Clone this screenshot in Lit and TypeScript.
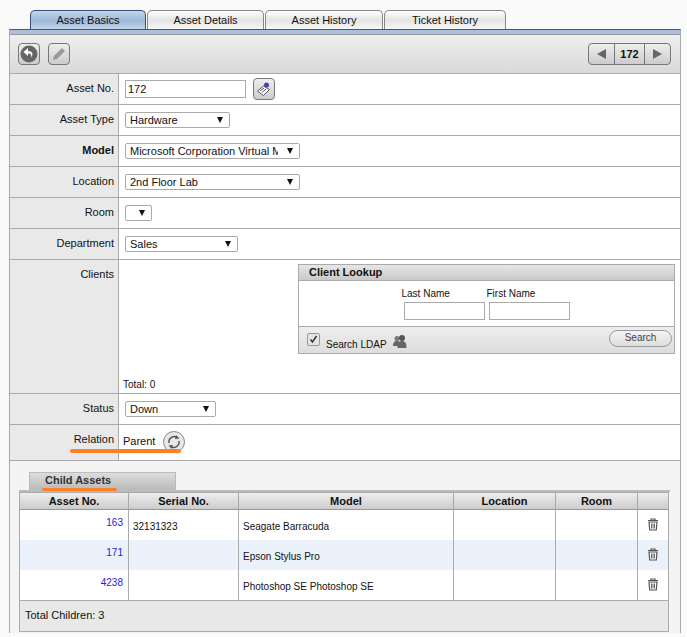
import { LitElement, html, css, svg } from "lit";
import { customElement } from "lit/decorators.js";

const sel = (text: string, cls: string) => html`<div class="sel ${cls}"><span class="seltext">${text}</span><span class="arrow"></span></div>`;
const trash = svg`<svg width="12" height="13" viewBox="0 0 12 13"><path d="M4 2V1h4v1M1 2.500h10" fill="none" stroke="#555" stroke-width="1.200"/><path d="M2 4h8l-.7 8H2.700z" fill="#fff" stroke="#555" stroke-width="1.200"/><path d="M4.500 5.500v5M6 5.500v5M7.500 5.500v5" stroke="#666"/></svg>`;

@customElement("app-root")
export class AppRoot extends LitElement {
  static styles = css`
    :host { display: block; width: 687px; height: 637px; background: #fafafa; font-family: "Liberation Sans", Arial, sans-serif; font-size: 11px; color: #111; position: relative; overflow: hidden; }
    .tabs { display: flex; padding: 10px 0 0 30px; height: 19px; gap: 1px; }
    .tab { height: 19px; box-sizing: border-box; border: 1px solid #888; border-bottom: 0; border-radius: 5px 5px 0 0; text-align: center; line-height: 18px; background: linear-gradient(#fff, #e4e4e4 50%, #f6f6f6); }
    .tab.active { background: linear-gradient(#c3d4e8, #9db8d8 55%, #c6d6e8); border-color: #33507f; }
    .t1 { width: 116px; } .t2 { width: 117px; } .t3 { width: 118px; } .t4 { width: 122px; }
    .panel { margin-left: 9px; width: 672px; box-sizing: border-box; border-top: 1px solid #555; border-right: 1px solid #aaa; border-left: 1px solid #aaa; }
    .band { height: 4px; background: #a9c1dd; border-bottom: 1px solid #999; }
    .toolbar { height: 39px; box-sizing: border-box; display: flex; align-items: center; justify-content: space-between; padding: 0 9px 0 8px; background: linear-gradient(#efefef, #d9d9d9); border-bottom: 1px solid #aaa; }
    .btns { display: flex; gap: 8px; }
    .ibtn { width: 22px; height: 22px; box-sizing: border-box; border: 1px solid #777; border-radius: 4px; background: linear-gradient(#eee, #ccc); display: flex; align-items: center; justify-content: center; }
    .pager { display: flex; height: 22px; box-sizing: border-box; border: 1px solid #777; border-radius: 4px; background: linear-gradient(#eee, #ccc); align-items: stretch; }
    .pager div { display: flex; align-items: center; justify-content: center; }
    .pg-a { width: 25px; } .pg-n { width: 29px; border-left: 1px solid #777; border-right: 1px solid #777; font-weight: bold; }
    .tl { border-style: solid; border-width: 5px 9px 5px 0; border-color: transparent #666 transparent transparent; }
    .tr { border-style: solid; border-width: 5px 0 5px 9px; border-color: transparent transparent transparent #666; }
    .row { display: grid; grid-template-columns: 108px 1fr; border-bottom: 1px solid #aaa; height: 31px; box-sizing: border-box; }
    .label { background: #e9e9e9; border-right: 1px solid #aaa; text-align: right; padding: 8px 4px 0 0; box-sizing: border-box; width: 109px; }
    .label b { font-weight: bold; }
    .val { background: #fff; display: flex; align-items: center; padding: 0 0 0 6px; gap: 7px; margin-left: 1px; }
    .h36 { height: 36px; } .h134 { height: 134px; }
    input.txt { box-sizing: border-box; height: 18px; border: 1px solid #aaa; font: 11px "Liberation Sans", Arial, sans-serif; padding: 0 2px; color: #111; background: #fff; outline: none; }
    .no { width: 121px; margin-top: -1px; }
    .sel { height: 16px; border: 1px solid #aaa; border-radius: 2px; display: flex; align-items: center; justify-content: space-between; background: #fff; padding: 0 6px 0 4px; box-sizing: border-box; }
    .seltext { overflow: hidden; white-space: nowrap; }
    .arrow { flex: none; width: 0; height: 0; border-style: solid; border-width: 6px 3.500px 0 3.500px; border-color: #111 transparent transparent transparent; }
    .w105 { width: 105px; } .w175 { width: 175px; } .w27 { width: 27px; } .w113 { width: 113px; } .w91 { width: 91px; }
    .w175a .seltext { width: 148px; }
    .clients { position: relative; background: #fff; margin-left: 1px; display: flex; flex-direction: column; padding: 4px 5px 3px 4px; }
    .lookup { width: 377px; align-self: flex-end; box-sizing: border-box; border: 1px solid #aaa; }
    .lk-head { height: 16px; box-sizing: border-box; background: linear-gradient(#e6e6e6, #c9c9c9); border-bottom: 1px solid #aaa; font-weight: bold; padding: 1px 0 0 10px; }
    .lk-body { height: 46px; box-sizing: border-box; border-bottom: 1px solid #aaa; display: flex; justify-content: center; gap: 4px; padding: 7px 0 0 0; font-size: 10px; }
    .lk-f { display: flex; flex-direction: column; gap: 3px; width: 81px; }
    .lk-f span { margin-left: -2px; }
    .lk-f input { width: 81px; height: 18px; margin: 0; }
    .lk-foot { height: 26px; box-sizing: border-box; display: flex; align-items: center; justify-content: space-between; padding: 0 2px 0 8px; background: linear-gradient(#eee, #ddd); font-size: 10px; }
    .ldap { display: flex; align-items: center; gap: 5px; }
    .ldap-t { margin: 8px 0 0 1px; }
    .ldap-i { margin-top: 2px; }
    .cb { width: 11px; height: 11px; border: 1px solid #999; border-radius: 2px; background: #e4e4e4; display: flex; align-items: center; justify-content: center; margin-top: -1px; }
    .searchbtn { width: 63px; height: 17px; box-sizing: border-box; border: 1px solid #999; border-radius: 9px; background: linear-gradient(#f4f4f4, #ddd); text-align: center; line-height: 14px; margin-top: -3px; color: #444; }
    .total { font-size: 10px; margin-top: auto; }
    .relval { padding-left: 4px; gap: 8px; align-items: flex-start; }
    .relval span { margin-top: 10px; }
    .round { width: 22px; height: 22px; margin-top: 6px; }
    .child { background: #f4f4f4; height: 172px; padding: 11px 10px 0 9px; box-sizing: border-box; }
    .ctab { width: 147px; height: 18px; margin-left: 10px; box-sizing: border-box; border: 1px solid #bbb; background: linear-gradient(#ddd, #bbb); font-weight: bold; padding: 1px 0 0 15px; color: #333; }
    .cband { height: 2px; background: #bbb; }
    .tbl { width: 650px; box-sizing: border-box; border-left: 1px solid #aaa; border-right: 1px solid #aaa; border-bottom: 1px solid #aaa; }
    .grid { display: grid; grid-template-columns: 109px 110px 215px 102px 82px 1fr; }
    .th { height: 18px; box-sizing: border-box; background: linear-gradient(#eee, #ccc); border-bottom: 1px solid #999; border-top: 1px solid #aaa; border-right: 1px solid #aaa; text-align: center; font-weight: bold; line-height: 16px; }
    .th.last { border-right: 0; }
    .td { height: 30px; box-sizing: border-box; border-right: 1px solid #aaa; padding: 3px 4px 0; font-size: 10px; display: flex; align-items: center; background: #fff; }
    .td.del { border-right: 0; justify-content: center; padding: 0 0 1px 0; }
    .td.num { color: #2222dd; justify-content: flex-end; align-items: flex-start; padding: 7px 5px 0 0; }
    .alt .td { background: #eaf1fb; }
    .rowset { display: contents; }
    .foot { height: 31px; border-top: 1px solid #aaa; background: #e8e8e8; display: flex; align-items: center; padding: 0 0 3px 5px; box-sizing: border-box; font-size: 11px; }
    .mark { position: absolute; background: #ff7f27; border-radius: 2px; height: 4px; }
    .m1 { left: 70px; top: 449px; width: 111px; }
    .m2 { left: 42px; top: 488px; width: 75px; height: 3px; }
  `;

  render() {
    const rows = [
      ["163", "32131323", "Seagate Barracuda", ""],
      ["171", "", "Epson Stylus Pro", "alt"],
      ["4238", "", "Photoshop SE Photoshop SE", ""],
    ];
    return html`
      <div class="tabs">
        <div class="tab active t1">Asset Basics</div>
        <div class="tab t2">Asset Details</div>
        <div class="tab t3">Asset History</div>
        <div class="tab t4">Ticket History</div>
      </div>
      <div class="panel">
        <div class="band"></div>
        <div class="toolbar">
          <div class="btns">
            <div class="ibtn"><svg width="18" height="18" viewBox="0 0 18 18"><circle cx="9" cy="9" r="8.500" fill="#666"/><path d="M8 3 3.500 7 8 11V8.500c2.800 0 4 1.500 3 4.500 2.800-3.800 1.500-7-3-7z" fill="#fff"/></svg></div>
            <div class="ibtn"><svg width="16" height="16" viewBox="0 0 16 16"><path d="M2 14l.9-4L11 2l3 3-8 8z" fill="#999"/></svg></div>
          </div>
          <div class="pager"><div class="pg-a"><span class="tl"></span></div><div class="pg-n">172</div><div class="pg-a"><span class="tr"></span></div></div>
        </div>
        <div class="row"><div class="label">Asset No.</div><div class="val"><input class="txt no" value="172" /><div class="ibtn"><svg width="16" height="16" viewBox="0 0 16 16"><path d="M1.500 10l6-5 6 3.500-6 6z" fill="#fff" stroke="#555"/><path d="M4 10l4-3M6 11.500l4-3.500" stroke="#555"/><circle cx="10.500" cy="4" r="2.500" fill="#44a"/></svg></div></div></div>
        <div class="row"><div class="label">Asset Type</div><div class="val">${sel("Hardware", "w105")}</div></div>
        <div class="row"><div class="label"><b>Model</b></div><div class="val">${sel("Microsoft Corporation Virtual Machine", "w175 w175a")}</div></div>
        <div class="row"><div class="label">Location</div><div class="val">${sel("2nd Floor Lab", "w175")}</div></div>
        <div class="row"><div class="label">Room</div><div class="val">${sel("", "w27")}</div></div>
        <div class="row"><div class="label">Department</div><div class="val">${sel("Sales", "w113")}</div></div>
        <div class="row h134"><div class="label">Clients</div>
          <div class="clients">
            <div class="lookup">
              <div class="lk-head">Client Lookup</div>
              <div class="lk-body">
                <div class="lk-f"><span>Last Name</span><input class="txt" /></div>
                <div class="lk-f"><span>First Name</span><input class="txt" /></div>
              </div>
              <div class="lk-foot">
                <div class="ldap"><span class="cb"><svg width="9" height="9" viewBox="0 0 9 9"><path d="M1.500 4.500 3.500 7l4-6" fill="none" stroke="#333" stroke-width="1.500"/></svg></span><span class="ldap-t">Search LDAP</span>
                <svg class="ldap-i" width="15" height="13" viewBox="0 0 15 13"><circle cx="5" cy="3.500" r="2.500" fill="#777"/><circle cx="10" cy="3" r="3" fill="#555"/><path d="M1 11c0-3 1-5 4-5s3 2 3 5zM5.500 13c0-5 1-7 4.500-7s4.500 2 4.500 7z" fill="#666"/></svg></div>
                <div class="searchbtn">Search</div>
              </div>
            </div>
            <div class="total">Total: 0</div>
          </div>
        </div>
        <div class="row"><div class="label">Status</div><div class="val">${sel("Down", "w91")}</div></div>
        <div class="row h36"><div class="label">Relation</div><div class="val relval"><span>Parent</span>
          <svg class="round" viewBox="0 0 22 22"><circle cx="11" cy="11" r="10.500" fill="#e8e8e8" stroke="#888"/><path d="M6 12a5.500 5.500 0 0 1 8.500-5.500M16 10a5.500 5.500 0 0 1-8.500 5.500" fill="none" stroke="#555" stroke-width="1.500"/><path d="M13 4l3.500 3.500-4.500.5zM9 18l-3.500-3.500 4.500-.5z" fill="#555"/></svg></div></div>
        <div class="child">
          <div class="ctab">Child Assets</div>
          <div class="cband"></div>
          <div class="tbl">
            <div class="grid">
              <div class="th">Asset No.</div><div class="th">Serial No.</div><div class="th">Model</div><div class="th">Location</div><div class="th">Room</div><div class="th last"></div>
              ${rows.map((r) => html`<div class="rowset ${r[3]}">
                <div class="td num">${r[0]}</div><div class="td">${r[1]}</div><div class="td">${r[2]}</div><div class="td"></div><div class="td"></div><div class="td del">${trash}</div>
              </div>`)}
            </div>
            <div class="foot">Total Children: 3</div>
          </div>
        </div>
      </div>
      <div class="mark m1"></div>
      <div class="mark m2"></div>
    `;
  }
}
